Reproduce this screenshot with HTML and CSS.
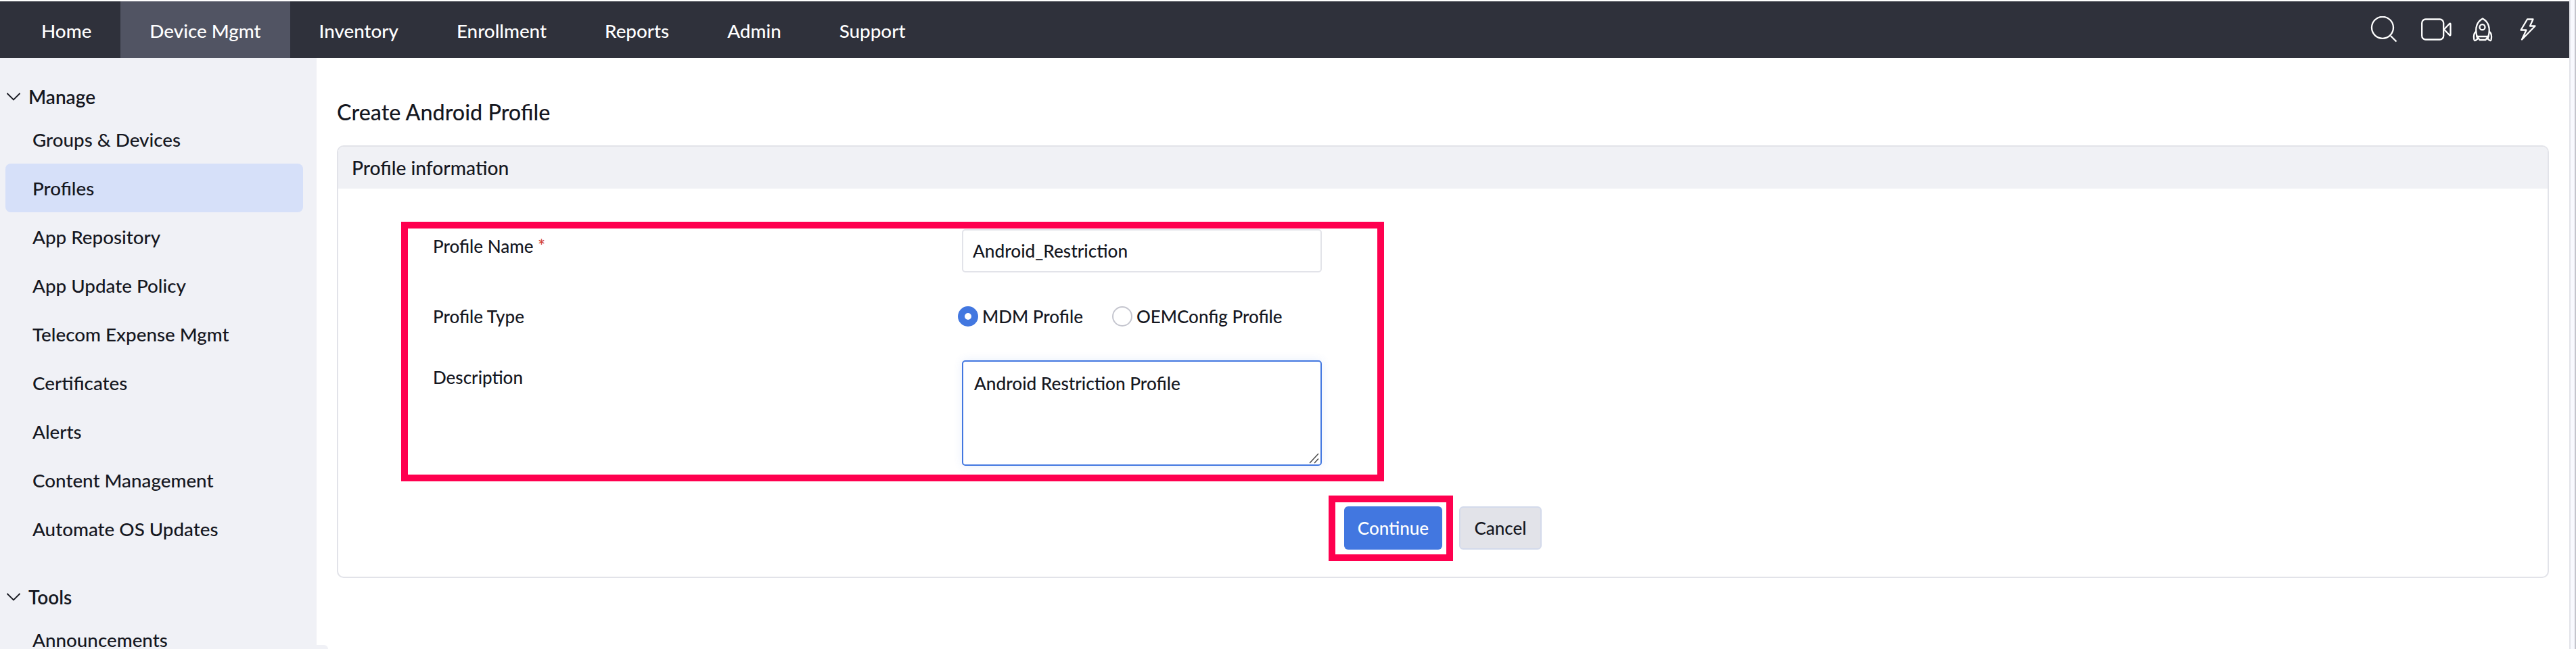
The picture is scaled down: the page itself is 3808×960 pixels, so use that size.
FILE: index.html
```
<!DOCTYPE html>
<html lang="en">

<head>
    <meta charset="UTF-8">
    <meta name="viewport" content="width=device-width, initial-scale=1.0">
    <title>Create Android Profile</title>
    <link rel="stylesheet" href="styles.css">
</head>

<body>
    <div class="window">
        <nav class="navbar">
            <a class="nav-link">Home</a>
            <a class="nav-link active">Device Mgmt</a>
            <a class="nav-link">Inventory</a>
            <a class="nav-link">Enrollment</a>
            <a class="nav-link">Reports</a>
            <a class="nav-link">Admin</a>
            <a class="nav-link">Support</a>
            <div class="nav-icons">
                <svg class="icon-search" width="40" height="40" viewBox="0 0 40 40">
                    <circle cx="18" cy="16.8" r="16" />
                    <path d="M30 29l8.5 8.5" />
                </svg>
                <svg class="icon-video" width="48" height="34" viewBox="0 0 48 34">
                    <rect x="2.2" y="1.5" width="32" height="30" rx="5.5" />
                    <path d="M35 16.5l8-8.5q1.500-1.200 1.500 1v15q0 2.200-1.500 1z" />
                </svg>
                <svg class="icon-rocket" width="30" height="36" viewBox="0 0 30 36">
                    <path d="M6.500 28C3.500 16 6 6.500 15 1.500c9 5 11.500 14.500 8.500 26.500z" />
                    <circle cx="14.5" cy="14.2" r="4" />
                    <path d="M5.500 20.500Q0.500 24 2.500 33q.5 1.500 2 .8l3-2.300L6 26M24.500 20.500Q29.500 24 27.500 33q-.5 1.500-2 .8l-3-2.300L24 26M8 29l2.500 4h9l2.500-4" />
                </svg>
                <svg class="icon-bolt" width="24" height="34" viewBox="0 0 24 34">
                    <path d="M11 1.500h8.500L15 11.500h7.500L3 31.500 9.500 17.500h-8z" />
                </svg>
            </div>
        </nav>

        <div class="layout">
            <aside class="sidebar">
                <h3 class="menu-title">
                    <svg width="22" height="12" viewBox="0 0 22 12"><path d="M1.500 1L11 10.500 20.500 1" /></svg>
                    Manage
                </h3>
                <ul class="menu">
                    <li>Groups &amp; Devices</li>
                    <li class="selected">Profiles</li>
                    <li>App Repository</li>
                    <li>App Update Policy</li>
                    <li>Telecom Expense Mgmt</li>
                    <li>Certificates</li>
                    <li>Alerts</li>
                    <li>Content Management</li>
                    <li>Automate OS Updates</li>
                </ul>
                <h3 class="menu-title">
                    <svg width="22" height="12" viewBox="0 0 22 12"><path d="M1.500 1L11 10.500 20.500 1" /></svg>
                    Tools
                </h3>
                <ul class="menu">
                    <li>Announcements</li>
                </ul>
            </aside>

            <main class="content">
                <h1>Create Android Profile</h1>
                <section class="panel">
                    <h2>Profile information</h2>
                    <form class="form">
                        <label for="name">Profile Name <span class="required">*</span></label>
                        <input class="field" id="name" type="text" value="Android_Restriction">

                        <label>Profile Type</label>
                        <div class="radios">
                            <span class="radio checked"></span>
                            <span class="radio-text">MDM Profile</span>
                            <span class="radio"></span>
                            <span class="radio-text">OEMConfig Profile</span>
                        </div>

                        <label for="description">Description</label>
                        <div class="textarea-wrap">
                            <textarea class="field" id="description">Android Restriction Profile</textarea>
                            <svg class="resize" width="16" height="16" viewBox="0 0 16 16"><path d="M1 15L14 1M8 15l6-6.500" /></svg>
                        </div>
                    </form>
                    <div class="buttons">
                        <button class="btn primary" type="button">Continue</button>
                        <button class="btn" type="button">Cancel</button>
                    </div>
                    <div class="highlight highlight-form"></div>
                    <div class="highlight highlight-continue"></div>
                </section>
            </main>
        </div>
        <div class="status-corner"></div>
    </div>
</body>

</html>
```

FILE: styles.css
```
* {
    box-sizing: border-box;
}

body {
    margin: 0;
    background-color: #fff;
    color: #15171f;
    font-family: Lato, sans-serif;
    font-size: 28px;
}

.window {
    position: relative;
    height: 960px;
    padding: 2px 10px 0 0;
    overflow: hidden;
    /* window edge on the right */
    background: linear-gradient(to right, #e2e3e9 2px, #f8f9fe 2px, #f8f9fe 8px, #c4c5cc 8px) right / 10px 100% no-repeat;
}

.navbar {
    display: flex;
    height: 84px;
    padding-left: 18px;
    background-color: #2f313b;
}

.nav-link {
    padding: 3px 43px 0 43px;
    font-size: 27.8px;
    font-weight: 500;
    line-height: 82px;
    color: #fff;
}

.nav-link.active {
    background-color: #515463;
}

.nav-icons {
    display: flex;
    align-items: center;
    margin-left: auto;
    padding-right: 49px;
}

.nav-icons svg {
    fill: none;
    stroke: #fff;
    stroke-width: 2.3;
    stroke-linejoin: round;
}

.icon-video {
    margin-left: 34px;
}

.icon-rocket {
    margin-left: 29px;
}

.icon-bolt {
    margin-left: 40px;
}

.layout {
    display: flex;
    height: 874px;
}

.sidebar {
    width: 468px;
    padding-top: 30px;
    background-color: #f0f1f6;
}

.menu-title {
    display: flex;
    align-items: center;
    gap: 11px;
    height: 54px;
    margin: 0;
    padding-left: 9px;
    font-size: 28px;
    font-weight: 600;
}

.menu-title svg {
    fill: none;
    stroke: #15171f;
    stroke-width: 1.8;
}

.menu {
    margin: 0 0 38px;
    padding: 0 20px 0 8px;
    list-style: none;
    font-size: 27.8px;
    font-weight: 500;
}

.menu li {
    height: 72px;
    padding-left: 40px;
    line-height: 73px;
}

.menu .selected {
    border-radius: 8px;
    background-color: #d6e0f9;
}

.content {
    flex: 1;
    padding: 60px 30px 0 30px;
    font-weight: 500;
}

h1 {
    margin: 0 0 29px;
    font-size: 32.3px;
    font-weight: 500;
    line-height: 40px;
}

.panel {
    position: relative;
    height: 640px;
    border: 2px solid #e2e3e9;
    border-radius: 10px;
}

h2 {
    margin: 0;
    padding-left: 20px;
    border-radius: 8px 8px 0 0;
    background-color: #f0f1f5;
    font-size: 28.2px;
    font-weight: 500;
    line-height: 62px;
}

.form {
    display: grid;
    grid-template-columns: 782px 532px;
    grid-template-rows: 64px 30px 156px;
    row-gap: 50px;
    padding: 60px 0 0 140px;
    font-size: 26px;
    line-height: 30px;
}

.form label {
    padding-top: 10px;
}

.form label:nth-of-type(2) {
    padding-top: 0;
}

.required {
    color: #d2453a;
}

.field {
    display: block;
    width: 532px;
    height: 64px;
    padding: 0 14px;
    border: 2px solid #e2e3e9;
    border-radius: 5px;
    outline: none;
    background-color: #fff;
    color: #15171f;
    font: 500 26.2px Lato, sans-serif;
}

.textarea-wrap {
    position: relative;
}

textarea.field {
    height: 156px;
    padding: 16px;
    border-color: #4277e0;
    box-shadow: 0 0 14px rgba(66, 119, 224, 0.12);
    resize: none;
}

.resize {
    position: absolute;
    right: 3px;
    bottom: 3px;
    fill: none;
    stroke: #444;
    stroke-width: 1.4;
}

.radios {
    display: flex;
    align-items: center;
    margin-left: -6px;
}

.radio {
    width: 30px;
    height: 30px;
    border: 2px solid #c5c6cf;
    border-radius: 50%;
}

.radio.checked {
    border: 10px solid #4277e0;
}

.radio-text {
    margin: 0 43px 0 6px;
}

.buttons {
    display: flex;
    gap: 25px;
    margin: 60px 0 0 1487px;
}

.btn {
    width: 122px;
    height: 64px;
    padding: 0;
    border: 2px solid #d3daeb;
    border-radius: 6px;
    background-color: #e2e3e9;
    color: #15171f;
    font: 500 26px Lato, sans-serif;
}

.btn.primary {
    width: 145px;
    border: 0;
    background-color: #4277e0;
    color: #fff;
}

.highlight {
    position: absolute;
    border: 10px solid #ff004f;
}

.highlight-form {
    left: 93px;
    top: 111px;
    width: 1453px;
    height: 384px;
}

.highlight-continue {
    left: 1464px;
    top: 516px;
    width: 184px;
    height: 97px;
}

.status-corner {
    position: absolute;
    left: 0;
    bottom: 0;
    width: 485px;
    height: 6px;
    z-index: -1;
    border-radius: 0 6px 0 0;
    background-color: #f0f1f6;
}
```
